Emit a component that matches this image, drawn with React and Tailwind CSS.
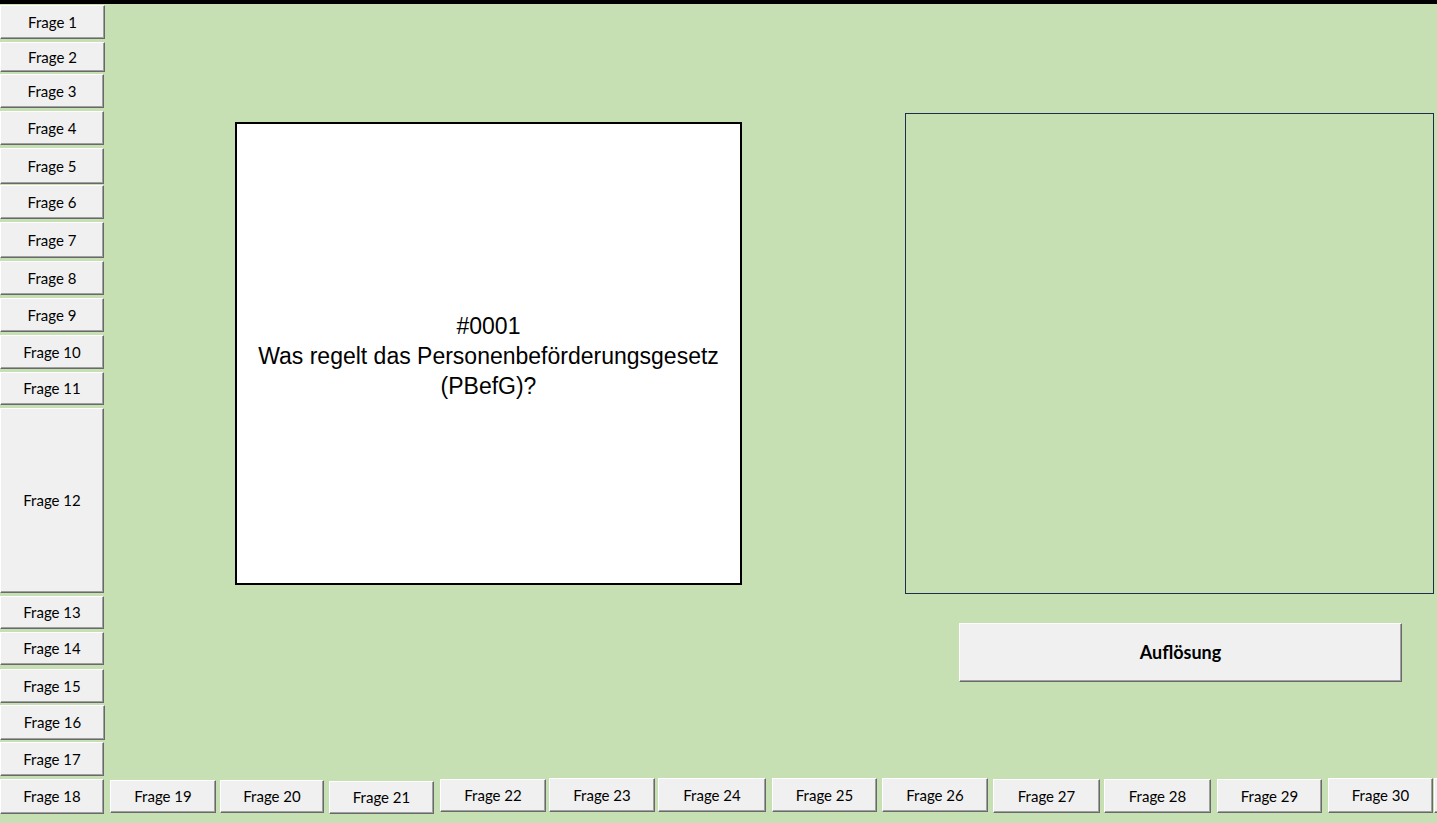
const LEFT = [
  { label: 'Frage 1', cls: 'mt-[1px] h-[34px] w-[105px]' },
  { label: 'Frage 2', cls: 'mt-[3px] h-[30px] w-[105px]' },
  { label: 'Frage 3', cls: 'mt-[2px] h-[34px] w-[104px]' },
  { label: 'Frage 4', cls: 'mt-[3px] h-[34px] w-[104px]' },
  { label: 'Frage 5', cls: 'mt-[3px] h-[36px] w-[104px]' },
  { label: 'Frage 6', cls: 'mt-[1px] h-[34px] w-[104px]' },
  { label: 'Frage 7', cls: 'mt-[3px] h-[36px] w-[104px]' },
  { label: 'Frage 8', cls: 'mt-[3px] h-[34px] w-[104px]' },
  { label: 'Frage 9', cls: 'mt-[3px] h-[34px] w-[104px]' },
  { label: 'Frage 10', cls: 'mt-[3px] h-[34px] w-[104px]' },
  { label: 'Frage 11', cls: 'mt-[3px] h-[33px] w-[104px]' },
  { label: 'Frage 12', cls: 'mt-[3px] h-[185px] w-[104px]' },
  { label: 'Frage 13', cls: 'mt-[3px] h-[33px] w-[104px]' },
  { label: 'Frage 14', cls: 'mt-[3px] h-[33px] w-[104px]' },
  { label: 'Frage 15', cls: 'mt-[4px] h-[34px] w-[104px]' },
  { label: 'Frage 16', cls: 'mt-[2px] h-[35px] w-[105px]' },
  { label: 'Frage 17', cls: 'mt-[2px] h-[34px] w-[104px]' },
]

const BOTTOM = [
  { label: 'Frage 18', cls: 'mt-[3px] h-[35px] w-[104px]' },
  { label: 'Frage 19', cls: 'ml-[6px] mt-[4px] h-[33px] w-[106px]' },
  { label: 'Frage 20', cls: 'ml-[4px] mt-[4px] h-[33px] w-[104px]' },
  { label: 'Frage 21', cls: 'ml-[5px] mt-[5px] h-[33px] w-[105px]' },
  { label: 'Frage 22', cls: 'ml-[6px] mt-[3px] h-[33px] w-[106px]' },
  { label: 'Frage 23', cls: 'ml-[3px] mt-[2px] h-[34px] w-[106px]' },
  { label: 'Frage 24', cls: 'ml-[3px] mt-[2px] h-[34px] w-[108px]' },
  { label: 'Frage 25', cls: 'ml-[6px] mt-[2px] h-[34px] w-[105px]' },
  { label: 'Frage 26', cls: 'ml-[5px] mt-[2px] h-[34px] w-[106px]' },
  { label: 'Frage 27', cls: 'ml-[5px] mt-[3px] h-[34px] w-[107px]' },
  { label: 'Frage 28', cls: 'ml-[4px] mt-[3px] h-[34px] w-[107px]' },
  { label: 'Frage 29', cls: 'ml-[6px] mt-[3px] h-[34px] w-[105px]' },
  { label: 'Frage 30', cls: 'ml-[6px] mt-[2px] h-[35px] w-[105px]' },
  { label: '', cls: 'ml-[1px] mt-[2px] h-[35px] w-[20px]' },
]

function XlButton({ label, className = '', bold = false, size = 'text-[15px]' }) {
  return (
    <div
      className={`flex shrink-0 items-center justify-center border-t border-l border-white border-r border-b border-r-[#696969] border-b-[#696969] bg-[#f0f0f0] shadow-[inset_-1px_-1px_0_#a0a0a0] text-black ${size} ${
        bold ? 'font-bold' : ''
      } ${className}`}
    >
      {label}
    </div>
  )
}

export default function App() {
  return (
    <div
      className="flex h-[823px] w-[1437px] flex-col overflow-hidden bg-[#c6e0b4]"
      style={{ fontFamily: 'Lato, "Open Sans", sans-serif' }}
    >
      <div className="h-[4px] shrink-0 bg-black" />

      <div className="flex h-[772px] shrink-0">
        {/* linke Spalte */}
        <div className="flex w-[105px] shrink-0 flex-col">
          {LEFT.map((b) => (
            <XlButton key={b.label} label={b.label} className={b.cls} />
          ))}
        </div>

        {/* Frage */}
        <div className="ml-[130px] mt-[118px] flex h-[463px] w-[507px] shrink-0 items-center justify-center border-2 border-black bg-white pt-[5px]">
          <p
            className="text-center text-[23px] leading-[30px] text-black"
            style={{ fontFamily: '"Liberation Sans", Arial, sans-serif' }}
          >
            #0001
            <br />
            Was regelt das Personenbeförderungsgesetz
            <br />
            (PBefG)?
          </p>
        </div>

        {/* Antwort */}
        <div className="ml-[163px] mt-[109px] flex shrink-0 flex-col">
          <div className="h-[481px] w-[529px] border border-[#1f2d4a]" />
          <XlButton label="Auflösung" bold size="text-[18px]" className="ml-[54px] mt-[29px] h-[59px] w-[443px]" />
        </div>
      </div>

      <div className="flex shrink-0 items-start">
        {BOTTOM.map((b, i) => (
          <XlButton key={i} label={b.label} className={b.cls} />
        ))}
      </div>
    </div>
  )
}
